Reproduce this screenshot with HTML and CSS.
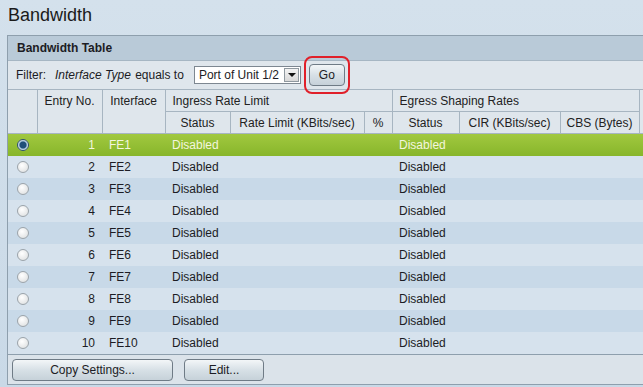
FILE: index.html
```html
<!DOCTYPE html>
<html lang="en">
  <head>
    <meta charset="UTF-8" />
    <title>Bandwidth</title>
    <link rel="stylesheet" href="styles.css">
  </head>
  <body>
    <h1 class="page-title">Bandwidth</h1>

    <div class="panel">
      <div class="panel-head">Bandwidth Table</div>

      <div class="filter">
        <span>Filter:</span>
        <span><i>Interface Type</i> equals to</span>
        <div class="select">
          <span>Port of Unit 1/2</span>
          <span class="select-arrow"></span>
        </div>
        <div class="go-ring">
          <button class="btn go">Go</button>
        </div>
      </div>

      <table class="grid">
        <colgroup>
          <col style="width: 29px" />
          <col style="width: 65px" />
          <col style="width: 63px" />
          <col style="width: 65px" />
          <col style="width: 134px" />
          <col style="width: 28px" />
          <col style="width: 67px" />
          <col style="width: 101px" />
          <col style="width: 79px" />
          <col style="width: 20px" />
        </colgroup>
        <thead>
          <tr>
            <th rowspan="2"></th>
            <th rowspan="2" class="top">Entry No.</th>
            <th rowspan="2" class="top">Interface</th>
            <th colspan="3" class="left">Ingress Rate Limit</th>
            <th colspan="3" class="left">Egress Shaping Rates</th>
            <th rowspan="2"></th>
          </tr>
          <tr>
            <th>Status</th>
            <th>Rate Limit (KBits/sec)</th>
            <th>%</th>
            <th>Status</th>
            <th>CIR (KBits/sec)</th>
            <th>CBS (Bytes)</th>
          </tr>
        </thead>
        <tbody id="rows"></tbody>
      </table>

      <div class="footer">
        <button class="btn wide">Copy Settings...</button>
        <button class="btn">Edit...</button>
      </div>
    </div>

    <script>
      const rows = document.getElementById("rows");
      for (let i = 1; i <= 10; i++) {
        const tr = document.createElement("tr");
        if (i === 1) tr.className = "selected";
        tr.innerHTML =
          '<td><span class="radio"></span></td>' +
          '<td class="num">' + i + "</td>" +
          "<td>FE" + i + "</td>" +
          "<td>Disabled</td><td></td><td></td>" +
          "<td>Disabled</td><td></td><td></td><td></td>";
        rows.appendChild(tr);
      }
    </script>
  </body>
</html>
```

FILE: styles.css
```css
html,
body {
  margin: 0;
  height: 100%;
  overflow: hidden;
}

body {
  font-family: "Liberation Sans", Arial, sans-serif;
  font-size: 12px;
  color: #1c1c24;
  background: linear-gradient(#d4e1ec, #c9d9e7);
}

.page-title {
  margin: 0;
  padding: 5px 0 0 8px;
  height: 35px;
  box-sizing: border-box;
  font-size: 18px;
  font-weight: normal;
  color: #1a1a1a;
}

.panel {
  margin-left: 7px;
  width: 680px;
  border: 1px solid #8e9fad;
  border-right: none;
  background: #dbe3ea;
}

.panel-head {
  height: 24px;
  line-height: 24px;
  padding-left: 9px;
  font-weight: bold;
  background: #b9cad8;
  border-bottom: 1px solid #a6b6c3;
}

.filter {
  height: 28px;
  display: flex;
  align-items: center;
  gap: 6px;
  padding-left: 8px;
  background: #dfe6ec;
}

.filter i {
  margin-left: 3px;
  margin-right: 1px;
}

.select {
  display: flex;
  align-items: center;
  justify-content: space-between;
  width: 101px;
  height: 16px;
  margin-left: 4px;
  padding-left: 4px;
  background: #fff;
  border: 1px solid #7d8791;
}

.select-arrow {
  width: 15px;
  height: 14px;
  margin-right: 1px;
  border: 1px solid #8f989f;
  box-sizing: border-box;
  background: linear-gradient(#f3f3f3, #d8d8d8);
  position: relative;
}

.select-arrow::after {
  content: "";
  position: absolute;
  left: 3px;
  top: 4px;
  border-left: 4px solid transparent;
  border-right: 4px solid transparent;
  border-top: 4px solid #111;
}

.go-ring {
  margin-left: -3px;
  padding: 6px 3px;
  border: 2px solid #e0202a;
  border-radius: 8px;
  display: flex;
}

.btn {
  font-family: "Liberation Sans", Arial, sans-serif;
  font-size: 12px;
  color: #1c1c24;
  height: 22px;
  padding: 0;
  border: 1px solid #6f7b86;
  border-radius: 4px;
  background: linear-gradient(#f3f6f8, #d7e0e6 50%, #c6d1d9);
}

.go {
  width: 36px;
}

.grid {
  border-collapse: collapse;
  table-layout: fixed;
  width: 651px;
}

.grid th {
  font-weight: normal;
  color: #222;
  height: 21px;
  padding: 0;
  text-align: center;
  background: #dfe6ec;
  border: 1px solid #a7b5c1;
}

.grid thead tr:first-child th:first-child {
  border-left: none;
}

.grid th.top {
  vertical-align: top;
  padding-top: 4px;
}

.grid th.left {
  text-align: left;
  padding-left: 7px;
}

.grid td {
  height: 22px;
  padding: 0 0 0 7px;
  white-space: nowrap;
}

.grid td.num {
  text-align: right;
  padding: 0 7px 0 0;
}

.grid td:first-child {
  padding: 0;
  text-align: center;
}

.grid tbody tr:nth-child(odd) {
  background: #c8d9e8;
}

.grid tbody tr:nth-child(even) {
  background: #d6e2ed;
}

.grid tbody tr.selected {
  background: linear-gradient(#a1c83f, #86b52a);
  color: #f3f6df;
}

.radio {
  display: inline-block;
  width: 10px;
  height: 10px;
  margin-top: 3px;
  border-radius: 50%;
  border: 1px solid #9aa3aa;
  background: radial-gradient(circle at 40% 35%, #ffffff, #dadcdd);
}

.selected .radio {
  border-color: #2c4f6b;
  background: radial-gradient(circle, #1f4f78 3px, #9dbfd6 4px, #e7eef3 5px);
}

.footer {
  display: flex;
  gap: 11px;
  padding: 4px 0 4px 4px;
  height: 30px;
  box-sizing: border-box;
  border-top: 1px solid #8e9fad;
  background: #dbe3ea;
}

.footer .btn {
  width: 80px;
}

.footer .btn.wide {
  width: 161px;
}
```
